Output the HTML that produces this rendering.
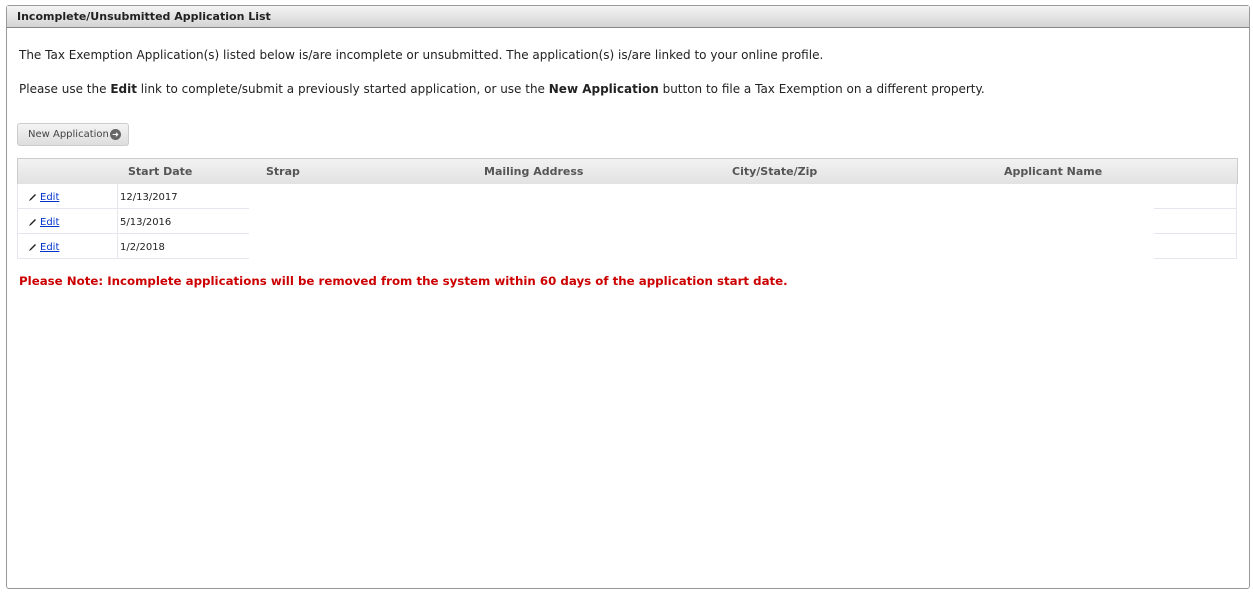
<!DOCTYPE html>
<html><head><style>
body{margin:0;width:1253px;height:592px;background:#fff;font-family:"DejaVu Sans",Verdana,sans-serif;position:relative;overflow:hidden}
.panel{position:absolute;left:6px;top:5px;width:1242px;height:582px;border:1px solid #999;border-radius:3px;background:#fff}
.hdr{height:21px;background:linear-gradient(#f4f4f4,#d4d4d4);border-bottom:1px solid #888;font-weight:bold;font-size:11px;line-height:22px;padding-left:10px;color:#222}
p{position:absolute;left:12px;margin:0;font-size:12px;color:#222}
.btn{position:absolute;left:10px;top:117px;width:112px;height:23px;border:1px solid #ccc;border-radius:3px;background:linear-gradient(#f4f4f4,#ddd);font-size:10px;color:#444;line-height:22px;padding-left:10px;box-sizing:border-box}
.btn i{position:absolute;left:92px;top:5px;width:11px;height:11px;border-radius:50%;background:#666;color:#fff;font-style:normal;font-size:8px;line-height:11px;text-align:center}
.th{position:absolute;left:10px;top:152px;width:1219px;height:25px;border:1px solid #ccc;border-bottom:none;background:linear-gradient(#f2f2f2,#e2e2e2);font-size:11px;font-weight:bold;color:#555}
.th span{position:absolute;top:6px}
.row{position:absolute;left:10px;width:231px;height:24px;border-left:1px solid #e6e6ee;border-bottom:1px solid #e6e6ee;font-size:10px;color:#222}
.row .c1{position:absolute;left:0;width:99px;height:24px;border-right:1px solid #e6e6ee}
.row a{position:absolute;left:22px;top:8px;color:#0033cc;text-decoration:underline}
.row svg{position:absolute;left:10px;top:9px}
.row .d{position:absolute;left:102px;top:8px}
.rr{position:absolute;left:1147px;width:82px;height:24px;border-right:1px solid #e6e6ee;border-bottom:1px solid #e6e6ee}
.note{position:absolute;left:12px;top:268px;color:#cc0000;font-weight:bold;font-size:11.8px}
</style></head><body>
<div class="panel">
<div class="hdr">Incomplete/Unsubmitted Application List</div>
<p style="top:42px">The Tax Exemption Application(s) listed below is/are incomplete or unsubmitted. The application(s) is/are linked to your online profile.</p>
<p style="top:76px">Please use the <b>Edit</b> link to complete/submit a previously started application, or use the <b>New Application</b> button to file a Tax Exemption on a different property.</p>
<div class="btn">New Application<i>➜</i></div>
<div class="th"><span style="left:110px">Start Date</span><span style="left:248px">Strap</span><span style="left:466px">Mailing Address</span><span style="left:714px">City/State/Zip</span><span style="left:986px">Applicant Name</span></div>
<div class="row" style="top:178px"><div class="c1"><svg width="9" height="9"><path d="M1 8L2 6L7 1L8 2L3 7Z" fill="#222"/></svg><a>Edit</a></div><span class="d">12/13/2017</span></div>
<div class="row" style="top:203px"><div class="c1"><svg width="9" height="9"><path d="M1 8L2 6L7 1L8 2L3 7Z" fill="#222"/></svg><a>Edit</a></div><span class="d">5/13/2016</span></div>
<div class="row" style="top:228px"><div class="c1"><svg width="9" height="9"><path d="M1 8L2 6L7 1L8 2L3 7Z" fill="#222"/></svg><a>Edit</a></div><span class="d">1/2/2018</span></div>
<div class="rr" style="top:178px"></div><div class="rr" style="top:203px"></div><div class="rr" style="top:228px"></div>
<div class="note">Please Note: Incomplete applications will be removed from the system within 60 days of the application start date.</div>
</div>
</body></html>
